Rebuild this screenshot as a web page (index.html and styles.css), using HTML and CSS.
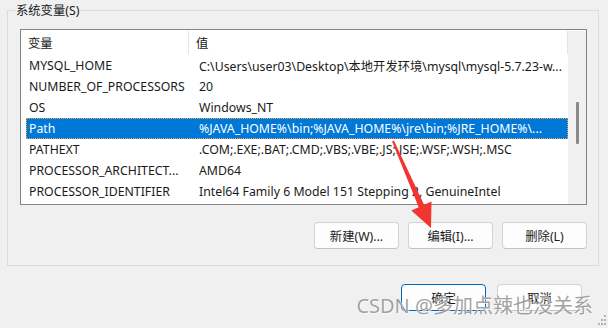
FILE: index.html
```html
<!DOCTYPE html>
<html lang="zh-CN">
<head>
<meta charset="utf-8">
<title>系统变量</title>
<link rel="stylesheet" href="styles.css">
</head>
<body>
<div class="dialog">
  <fieldset class="group">
    <legend class="group-title">系统变量(S)</legend>
    <div class="listbox">
      <div class="rows">
        <div class="header">
          <div class="hcell hname">变量</div>
          <div class="hcell hvalue">值</div>
        </div>
        <div class="row"><span class="name">MYSQL_HOME</span><span class="value">C:\Users\user03\Desktop\本地开发环境\mysql\mysql-5.7.23-w...</span></div>
        <div class="row"><span class="name">NUMBER_OF_PROCESSORS</span><span class="value">20</span></div>
        <div class="row"><span class="name">OS</span><span class="value">Windows_NT</span></div>
        <div class="row selected"><span class="name">Path</span><span class="value">%JAVA_HOME%\bin;%JAVA_HOME%\jre\bin;%JRE_HOME%\...</span></div>
        <div class="row"><span class="name">PATHEXT</span><span class="value">.COM;.EXE;.BAT;.CMD;.VBS;.VBE;.JS;.JSE;.WSF;.WSH;.MSC</span></div>
        <div class="row"><span class="name">PROCESSOR_ARCHITECT...</span><span class="value">AMD64</span></div>
        <div class="row"><span class="name">PROCESSOR_IDENTIFIER</span><span class="value">Intel64 Family 6 Model 151 Stepping 2, GenuineIntel</span></div>
      </div>
      <div class="scrollbar"><div class="thumb"></div></div>
    </div>
    <div class="actions">
      <button class="btn">新建(W)...</button>
      <button class="btn">编辑(I)...</button>
      <button class="btn">删除(L)</button>
    </div>
  </fieldset>
  <div class="footer">
    <button class="btn primary">确定</button>
    <button class="btn">取消</button>
  </div>
</div>
<div class="watermark">CSDN @多加点辣也没关系</div>
<svg class="grip" width="10" height="12" viewBox="0 0 10 12">
  <rect x="6" y="1" width="2" height="2" fill="#b4b4b4"/>
  <rect x="3" y="5" width="2" height="2" fill="#b4b4b4"/>
  <rect x="6" y="5" width="2" height="2" fill="#b4b4b4"/>
  <rect x="0" y="9" width="2" height="2" fill="#b4b4b4"/>
  <rect x="3" y="9" width="2" height="2" fill="#b4b4b4"/>
  <rect x="6" y="9" width="2" height="2" fill="#b4b4b4"/>
</svg>
<svg class="arrow" width="608" height="328" viewBox="0 0 608 328">
  <polygon fill="#f2362f" points="393.9,140.6 424.1,204.8 431.5,201.6 431,228 411.3,210.4 418.7,207.2 392.1,141.4"/>
</svg>
</body>
</html>
```
FILE: styles.css
```css
* { box-sizing: border-box; }
html, body {
  margin: 0;
  padding: 0;
  width: 608px;
  height: 328px;
  overflow: hidden;
  background: #f0f0f0;
}
body {
  position: relative;
  font-family: "Noto Sans", "Noto Sans CJK SC", sans-serif;
  font-size: 12.3px;
  color: #1a1a1a;
}
.dialog {
  display: flex;
  flex-direction: column;
}
.group {
  margin: 2px 9px 0 7px;
  padding: 0 11px 16px 12px;
  border: 1px solid #dcdcdc;
  min-width: 0;
}
.group-title {
  margin-left: -5px;
  padding: 0 1px;
  line-height: 17px;
  font-size: 12.3px;
}
.listbox {
  margin-top: 10px;
  height: 176px;
  border: 1px solid #838383;
  background: #fff;
  display: flex;
}
.rows {
  flex: 1;
  min-width: 0;
  display: flex;
  flex-direction: column;
}
.header {
  height: 25px;
  display: flex;
  align-items: stretch;
}
.hcell {
  display: flex;
  align-items: center;
  padding-left: 7px;
  padding-top: 1px;
}
.hname {
  width: 168px;
  border-right: 1px solid #e5e5e5;
  margin: 1px 0;
}
.hvalue {
  flex: 1;
  border-right: 1px solid #e5e5e5;
  margin: 1px 0;
}
.row {
  height: 21px;
  margin-left: 5px;
  display: grid;
  grid-template-columns: 170px 1fr;
  align-items: center;
  padding-left: 2px;
  white-space: nowrap;
  border: 1px solid transparent;
}
.row .name, .row .value {
  overflow: hidden;
}
.row.selected {
  background: #0078d7;
  color: #fff;
  border: 1px dotted #f0a040;
}
.scrollbar {
  width: 18px;
  background: #f0f0f0;
  position: relative;
  margin: 1px 0 0 0;
}
.thumb {
  position: absolute;
  left: 8px;
  top: 71px;
  width: 3px;
  height: 42px;
  background: #8a8a8a;
  border-radius: 1px;
}
.actions {
  margin-top: 17px;
  display: flex;
  justify-content: flex-end;
  gap: 9px;
}
.btn {
  width: 85px;
  height: 27px;
  padding: 0;
  font-family: inherit;
  font-size: 12.3px;
  color: #1a1a1a;
  background: #fdfdfd;
  border: 1px solid #d3d3d3;
  border-bottom-color: #c2c2c2;
  border-radius: 4px;
}
.btn.primary {
  border: 1px solid #0067c0;
}
.footer {
  margin: 18px 26px 0 0;
  display: flex;
  justify-content: flex-end;
  gap: 11px;
}
.watermark {
  position: absolute;
  right: 15px;
  top: 292px;
  font-size: 20px;
  line-height: 28px;
  color: rgba(120, 120, 120, 0.7);
  text-shadow: 0 0 1px #fff, 1px 1px 0 rgba(255,255,255,0.6);
  white-space: nowrap;
  pointer-events: none;
}
.grip {
  position: absolute;
  right: 0;
  bottom: 2px;
}
.arrow {
  position: absolute;
  left: 0;
  top: 0;
  pointer-events: none;
}
```
